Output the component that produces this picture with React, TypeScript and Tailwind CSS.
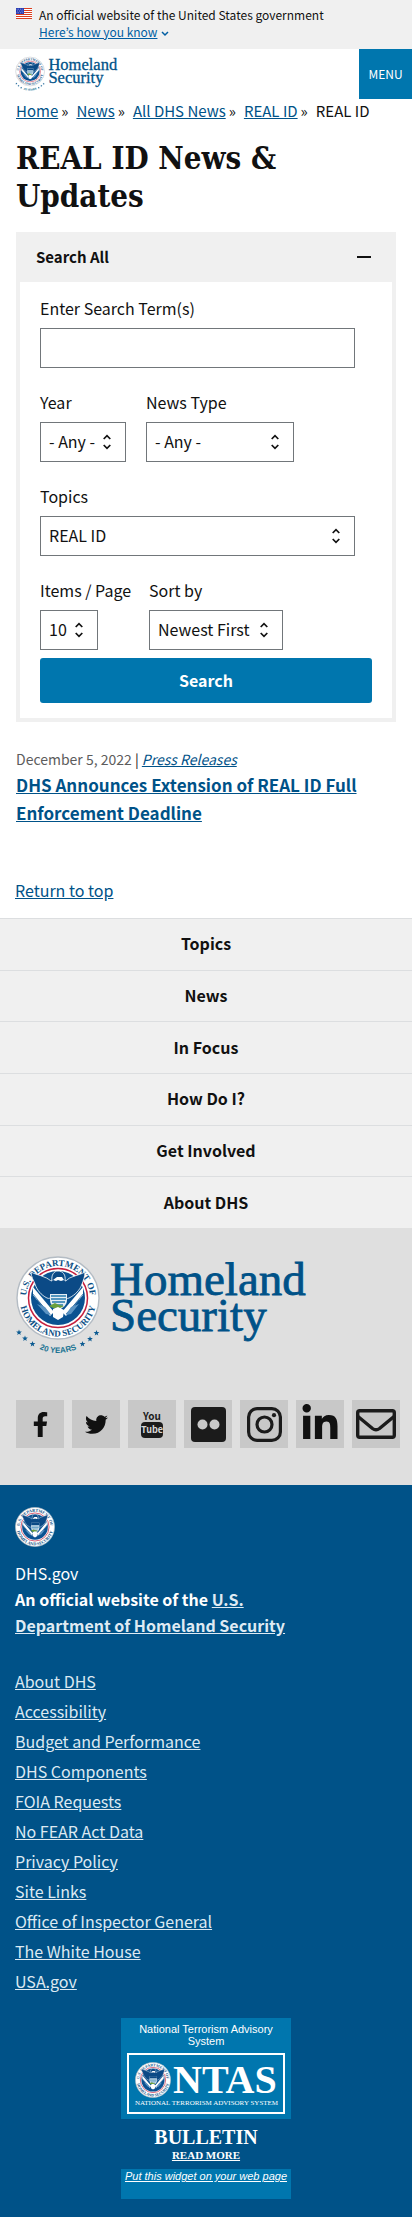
import React from 'react';
import { FaFacebookF, FaTwitter, FaLinkedinIn } from 'react-icons/fa';

function star(cx: number, cy: number, r: number) {
  return Array.from({ length: 10 }, (_, i) => {
    const a = (Math.PI / 5) * i - Math.PI / 2;
    const q = i % 2 ? r * 0.42 : r;
    return `${(cx + q * Math.cos(a)).toFixed(2)},${(cy + q * Math.sin(a)).toFixed(2)}`;
  }).join(' ');
}

function SealArt({ id }: { id: string }) {
  return (
    <g>
      <circle cx="43" cy="44" r="41" fill="#fff" stroke="#b4bcc4" strokeWidth="1.4" />
      <defs>
        <path id={`${id}-top`} d="M11 44a32 32 0 0 1 64 0" />
        <path id={`${id}-bottom`} d="M4.500 44a38.500 38.500 0 0 0 77 0" />
      </defs>
      <g fill="#0b4f85" className="font-['Liberation_Serif',serif] text-[9px] font-bold">
        <text textAnchor="middle">
          <textPath href={`#${id}-top`} startOffset="50%">U.S. DEPARTMENT OF</textPath>
        </text>
        <text textAnchor="middle">
          <textPath href={`#${id}-bottom`} startOffset="50%">HOMELAND SECURITY</textPath>
        </text>
      </g>
      <circle cx="43" cy="44" r="29.500" fill="#fff" stroke="#c5203e" strokeWidth="1.5" />
      <circle cx="43" cy="44" r="27" fill="#0b5291" />
      <path d="M18 33 39 58 35 62 18 41zM68 33 47 58l4 4 17-21z" fill="#fff" />
      <path d="M22 46 35 60M18 40l16 20M64 46 51 60M68 40 52 60" stroke="#0b5291" strokeWidth="0.7" />
      <path
        d="M16 18c3 2 9 3 13 5 4 1 6 4 8 4-1-6 2-10 6-10 5 0 8 4 7 10 2 0 3-3 7-4 5-2 10-3 13-5 0 5-2 9-3 12-2 6-7 11-13 14-2 1-4 0-5-2H37c-1 2-3 3-5 2-6-3-10-8-12-14-1-3-4-7-4-12z"
        fill="#0b4a86"
        stroke="#fff"
        strokeWidth="0.8"
      />
      <path d="m38 26 4-3h5l2 3-3 1-3-1-2 1z" fill="#fff" />
      <path d="M35 35h17v11c0 5-4 8-8.500 10-4.500-2-8.500-5-8.500-10z" fill="#e6edf3" />
      <path d="M35 35h17v5H35z" fill="#0b4a86" />
      <path d="M36 42h15M36 45h15M37 48h13M39 51h9" stroke="#2479ae" strokeWidth="1.3" />
      <path d="m34 52 6-3 4 2 5 1-6 3-5-1z" fill="#6a9f3b" />
      <path d="m38 55 5-2 6 3-1 7-5 3-5-3z" fill="#fff" />
      <path d="m22 50 8 3 6 8-5-1zM64 50l-8 3-5 8 5-1z" fill="#5b93c2" />
    </g>
  );
}

function Seal({ id, className }: { id: string; className: string }) {
  return (
    <svg viewBox="1 2 84 84" className={className} aria-hidden="true">
      <SealArt id={id} />
    </svg>
  );
}

function Logo({ id, className }: { id: string; className: string }) {
  const stars: [number, number][] = [[4, 78.5], [10, 84.5], [17.5, 90], [67.500, 90], [75, 85], [81.500, 79]];
  return (
    <svg viewBox="0 0 293 105" className={className} role="img" aria-label="U.S. Department of Homeland Security">
      <SealArt id={id} />
      {stars.map(([x, y]) => (
        <polygon key={x} points={star(x, y, 3)} fill="#0b5a91" />
      ))}
      <path id={`${id}-years`} d="M20 93q23 12 46 0" fill="none" />
      <text textAnchor="middle" fill="#1c7493" className="font-['Liberation_Sans',sans-serif] text-[8px] font-bold">
        <textPath href={`#${id}-years`} startOffset="50%">20 YEARS</textPath>
      </text>
      <g fill="#005288" stroke="#005288" strokeWidth="0.8" className="font-['Liberation_Serif',serif] text-[47px]">
        <text x="95" y="41">Homeland</text>
        <text x="95" y="77">Security</text>
      </g>
    </svg>
  );
}

function Flag() {
  return (
    <svg viewBox="0 0 16 11" className="mt-2 h-[11px] w-4 shrink-0" aria-hidden="true">
      <path fill="#fff" d="M0 0h16v11H0z" />
      <path stroke="#db3e1f" d="M0 .5h16M0 2.500h16M0 4.500h16M0 6.500h16M0 8.500h16M0 10.500h16" />
      <path fill="#1e33b1" d="M0 0h8v6H0z" />
      <path stroke="#fff" strokeWidth=".7" strokeDasharray=".7 1" d="M.7 1.200h7M1.400 3h6M.7 4.800h7" />
    </svg>
  );
}

const link = 'text-[#005288] underline';

function Select({ id, label, value, width }: { id: string; label: string; value: string; width: string }) {
  return (
    <div className={width}>
      <label htmlFor={id} className="block whitespace-nowrap leading-[22px]">{label}</label>
      <div className="relative mt-[9px]">
        <select id={id} className="block h-10 w-full appearance-none border border-[#71767a] bg-white pb-[2px] pl-2 text-[16px] text-[#111]">
          <option>{value}</option>
        </select>
        <svg viewBox="0 0 8 16" className="pointer-events-none absolute right-[15px] top-3 h-4 w-2" fill="none" stroke="#111" strokeWidth="1.700" aria-hidden="true">
          <path d="M.7 5 4 1.700 7.300 5M.7 11 4 14.300 7.300 11" />
        </svg>
      </div>
    </div>
  );
}

const crumbs = ['Home', 'News', 'All DHS News', 'REAL ID'];
const sections = ['Topics', 'News', 'In Focus', 'How Do I?', 'Get Involved', 'About DHS'];
const footerLinks = [
  'About DHS', 'Accessibility', 'Budget and Performance', 'DHS Components', 'FOIA Requests', 'No FEAR Act Data',
  'Privacy Policy', 'Site Links', 'Office of Inspector General', 'The White House', 'USA.gov',
];

function Flickr() {
  return (
    <svg viewBox="0 0 35 35" className="size-[35px]">
      <rect width="35" height="35" rx="4" fill="#1b1b1b" />
      <circle cx="11.500" cy="17.500" r="5" fill="#c9c9c9" />
      <circle cx="23.500" cy="17.500" r="5" fill="#c9c9c9" />
    </svg>
  );
}
function Instagram() {
  return (
    <svg viewBox="0 0 35 35" className="size-[35px]" fill="none" stroke="#1b1b1b" strokeWidth="3.200">
      <rect x="1.600" y="1.600" width="31.800" height="31.800" rx="8.500" />
      <circle cx="17.500" cy="17.500" r="7.500" />
      <circle cx="27" cy="8.200" r="2.100" fill="#1b1b1b" stroke="none" />
    </svg>
  );
}
function YouTube() {
  return (
    <svg viewBox="0 0 24 30" className="h-[30px] w-6">
      <rect x="1" y="13" width="22" height="16" rx="4" fill="#1b1b1b" />
      <g textAnchor="middle" className="font-['Noto_Sans_CJK_KR',sans-serif]">
        <text x="12" y="11" fill="#1b1b1b" className="text-[10px] font-bold">You</text>
        <text x="12" y="24" fill="#d8d8d8" className="text-[9px] font-bold">Tube</text>
      </g>
    </svg>
  );
}
function Mail() {
  return (
    <svg viewBox="0 0 40 30" className="h-[30px] w-10" fill="none" stroke="#1b1b1b" strokeWidth="3.400" strokeLinejoin="round">
      <rect x="1.700" y="1.700" width="36.600" height="26.600" rx="2" />
      <path d="M2 7.500 16.500 19.500q3.500 2.600 7 0L38 7.500" />
    </svg>
  );
}

const social: { name: string; icon: React.ReactNode }[] = [
  { name: 'Facebook', icon: <FaFacebookF size={25} /> },
  { name: 'Twitter', icon: <FaTwitter size={23} /> },
  { name: 'YouTube', icon: <YouTube /> },
  { name: 'Flickr', icon: <Flickr /> },
  { name: 'Instagram', icon: <Instagram /> },
  { name: 'LinkedIn', icon: <FaLinkedinIn size={40} /> },
  { name: 'Email', icon: <Mail /> },
];

export default function App() {
  return (
    <div className="bg-white font-['Noto_Sans_CJK_KR',sans-serif] text-[16px] text-[#111]">
      <section className="flex gap-[7px] bg-[#f0f0f0] pb-[9px] pl-4 text-[12px] leading-[17px]" aria-label="Official government website">
        <Flag />
        <div className="pt-[6px]">
          <p>An official website of the United States government</p>
          <button type="button" className="flex items-center gap-1 text-[#005ea2]">
            <span className="underline">Here’s how you know</span>
            <svg viewBox="0 0 8 6" className="mt-1 h-[6px] w-2" fill="none" stroke="#005ea2" strokeWidth="1.500"><path d="m1 1 3 3 3-3" /></svg>
          </button>
        </div>
      </section>

      <header className="flex items-start justify-between">
        <a href="#home" className="pl-[15px] pt-[7px]"><Logo id="head" className="h-[37px] w-[103px] overflow-visible" /></a>
        <button type="button" className="h-[50px] w-[53px] bg-[#0076ae] text-[12px] leading-5 text-white">MENU</button>
      </header>

      <main id="top" className="px-4">
        <nav aria-label="Breadcrumb">
          <ol className="flex whitespace-nowrap text-[15px] leading-6">
            {crumbs.map((c) => (
              <li key={c} className="pr-2"><a href="#crumb" className={link}>{c}</a><span className="pl-[3px]">»</span></li>
            ))}
            <li>REAL ID</li>
          </ol>
        </nav>

        <h1 className="pt-4 font-['DejaVu_Serif_Condensed','DejaVu_Serif',serif] text-[31px] font-bold leading-[38px] text-[#111]">
          REAL ID News &amp; Updates
        </h1>

        <section className="mt-[17px] border-4 border-t-0 border-[#f0f0f0]">
          <h2 className="bg-[#f0f0f0]">
            <button type="button" aria-expanded="true" className="flex h-[50px] w-full items-center justify-between pl-4 pr-[21px] text-[15px] font-bold">
              Search All
              <span className="h-[2px] w-[14px] bg-[#111]" />
            </button>
          </h2>
          <form className="px-5 pb-[15px] pt-[15px]" onSubmit={(e) => e.preventDefault()}>
            <div className="pr-[17px]">
              <label htmlFor="terms" className="block leading-[22px]">Enter Search Term(s)</label>
              <input id="terms" type="text" className="mt-[9px] block h-10 w-full border border-[#71767a] px-2" />
            </div>
            <div className="flex gap-5 pt-[23px]">
              <Select id="year" label="Year" value="- Any -" width="w-[86px]" />
              <Select id="type" label="News Type" value="- Any -" width="w-[148px]" />
            </div>
            <div className="pr-[17px] pt-[23px]">
              <Select id="topic" label="Topics" value="REAL ID" width="w-full" />
            </div>
            <div className="flex pt-[23px]">
              <div className="w-[109px]"><Select id="items" label="Items / Page" value="10" width="w-[58px]" /></div>
              <Select id="sort" label="Sort by" value="Newest First" width="w-[134px]" />
            </div>
            <button type="submit" className="mt-2 h-[45px] w-full rounded-[3px] bg-[#0076ae] pb-[2px] font-bold text-white">Search</button>
          </form>
        </section>

        <article className="pt-[25px]">
          <p className="text-[14px] leading-6"><time className="text-[#5c5c5c]">December 5, 2022</time> | <a href="#press" className={`${link} italic`}>Press Releases</a></p>
          <h3 className="text-[17px] font-bold leading-7"><a href="#article" className={link}>DHS Announces Extension of REAL ID Full Enforcement Deadline</a></h3>
        </article>
        <p className="-ml-px pb-4 pt-[51px] leading-6"><a href="#top" className={link}>Return to top</a></p>
      </main>

      <footer>
        <nav aria-label="Footer" className="grid min-h-[310px] auto-rows-fr">
          {sections.map((s) => (
            <a key={s} href="#section" className="flex items-center justify-center border-t border-[#dcdee0] bg-[#f0f0f0] pb-[2px] font-bold">{s}</a>
          ))}
        </nav>
        <div className="bg-[#dfdfdf] pb-[37px] pl-4 pt-[26px]">
          <a href="#home" className="-ml-px block"><Logo id="foot" className="h-[105px] w-[293px] overflow-visible" /></a>
          <ul className="flex gap-2 pt-[41px]">
            {social.map((s) => (
              <li key={s.name}><a href="#social" aria-label={s.name} className="flex size-12 items-center justify-center bg-[#c8c8c8]">{s.icon}</a></li>
            ))}
          </ul>
        </div>
        <div className="bg-[#005288] px-[15px] pb-[19px] pt-[22px] text-white">
          <Seal id="small" className="size-10" />
          <p className="pt-[13px] leading-[26px]">DHS.gov</p>
          <p className="max-w-[290px] font-bold leading-[26px]">
            An official website of the <a href="#dhs" className="text-[#dfeaf3] underline">U.S. Department of Homeland Security</a>
          </p>
          <ul className="pt-7 leading-[30px]">
            {footerLinks.map((l) => (
              <li key={l}><a href="#link" className="text-[#dce9f2] underline">{l}</a></li>
            ))}
          </ul>
          <aside className="mx-auto mt-[22px] w-[170px] text-center">
            <div className="bg-[#0076ae] px-[6px] pb-[5px] pt-[5px]">
              <p className="px-2 font-['Liberation_Sans',sans-serif] text-[11px] leading-3">National Terrorism Advisory System</p>
              <a href="#ntas" className="mt-[6px] block border-2 border-white px-[6px] pb-1 pt-[7px]">
                <span className="flex items-center gap-[2px]">
                  <Seal id="ntas" className="size-9 shrink-0" />
                  <span className="font-['Liberation_Serif',serif] text-[40px] font-bold leading-9">NTAS</span>
                </span>
                <span className="block whitespace-nowrap font-['Liberation_Serif',serif] text-[7px] leading-[10px]">NATIONAL TERRORISM ADVISORY SYSTEM</span>
              </a>
            </div>
            <div className="pb-[6px] pt-2 font-['Liberation_Serif',serif] font-bold">
              <p className="text-[20px] leading-5">BULLETIN</p>
              <p className="text-[11px] leading-4"><a href="#bulletin" className="underline">READ MORE</a></p>
            </div>
            <div className="h-[30px] whitespace-nowrap bg-[#0076ae] font-['Liberation_Sans',sans-serif] text-[11px] italic leading-[15px]">
              <a href="#widget" className="underline">Put this widget on your web page</a>
            </div>
          </aside>
        </div>
      </footer>
    </div>
  );
}
